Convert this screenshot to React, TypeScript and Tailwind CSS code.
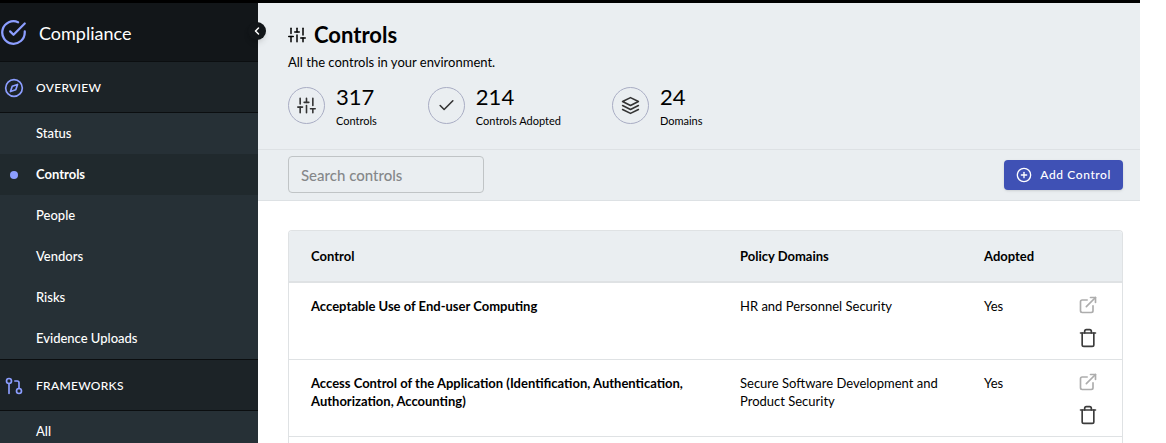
import type { ReactNode } from "react";
import {
  FiCheck,
  FiCheckCircle,
  FiChevronLeft,
  FiCompass,
  FiExternalLink,
  FiGitPullRequest,
  FiLayers,
  FiPlusCircle,
  FiSliders,
  FiTrash,
} from "react-icons/fi";

const overviewLinks = ["Status", "Controls", "People", "Vendors", "Risks", "Evidence Uploads"];

const controls = [
  {
    name: "Acceptable Use of End-user Computing",
    domain: "HR and Personnel Security",
    adopted: "Yes",
  },
  {
    name: "Access Control of the Application (Identification, Authentication, Authorization, Accounting)",
    domain: "Secure Software Development and Product Security",
    adopted: "Yes",
  },
];

function NavSection({ icon, title }: { icon: ReactNode; title: string }) {
  return (
    <h2 className="flex h-[51px] items-center gap-3 border-b border-[#0b0e10] bg-[#1c2327] pt-[2px] pl-1 text-xs font-medium tracking-wide text-white">
      <span className="text-[#8c9eff]">{icon}</span>
      {title}
    </h2>
  );
}

function NavLink({ label, active = false }: { label: string; active?: boolean }) {
  return (
    <li>
      <a
        href="#"
        aria-current={active ? "page" : undefined}
        className={
          active
            ? "flex h-[41px] items-center bg-[#20292d] pl-[10px] text-[13px] font-bold text-white"
            : "flex h-[41px] items-center pl-[10px] text-[13px] font-medium text-white"
        }
      >
        <span className={active ? "mr-[18px] size-2 rounded-full bg-[#8c9eff]" : "mr-[18px] size-2"} />
        {label}
      </a>
    </li>
  );
}

function Stat({ icon, value, label }: { icon: ReactNode; value: number; label: string }) {
  return (
    <div className="flex items-center gap-[11px]">
      <div className="flex size-[37px] items-center justify-center rounded-full border border-[#a9adc4] text-[#333]">
        {icon}
      </div>
      <div className="pt-[3px]">
        <div className="text-[22px] leading-7">{value}</div>
        <div className="text-[11px] leading-5">{label}</div>
      </div>
    </div>
  );
}

export default function App() {
  return (
    <div className="flex h-screen flex-col overflow-hidden bg-white pr-[26px] font-['Lato',sans-serif] text-black">
      <div className="h-[3px] shrink-0 bg-black" />
      <div className="flex min-h-0 flex-1">
        <aside className="relative w-[258px] shrink-0 bg-[#263036]">
          <div className="flex h-[59px] items-center gap-[12px] border-b border-[#0b0e10] bg-[#121619] text-lg text-white">
            <FiCheckCircle size={27} className="text-[#8c9eff]" />
            <span className="pt-[2px]">Compliance</span>
          </div>
          <button
            type="button"
            aria-label="Collapse sidebar"
            className="absolute top-[19px] -right-2 flex size-[18px] items-center justify-center rounded-full bg-[#121619] text-white shadow-md"
          >
            <FiChevronLeft size={12} strokeWidth={3} />
          </button>
          <nav>
            <NavSection icon={<FiCompass size={20} />} title="OVERVIEW" />
            <ul>
              {overviewLinks.map((label) => (
                <NavLink key={label} label={label} active={label === "Controls"} />
              ))}
            </ul>
            <div className="border-t border-[#0b0e10]">
              <NavSection icon={<FiGitPullRequest size={20} />} title="FRAMEWORKS" />
            </div>
            <ul>
              <NavLink label="All" />
            </ul>
          </nav>
        </aside>

        <main className="flex min-w-0 flex-1 flex-col">
          <header className="border-b border-[#dde1e4] bg-[#eaeef1] px-[30px] pt-[18px] pb-[18px]">
            <h1 className="flex items-center gap-2 text-[22px] leading-7 font-bold">
              <FiSliders size={18} />
              Controls
            </h1>
            <p className="mt-[3px] text-[13px] leading-5">All the controls in your environment.</p>
            <div className="mt-2 flex gap-[51px]">
              <Stat icon={<FiSliders size={19} strokeWidth={2} />} value={317} label="Controls" />
              <Stat icon={<FiCheck size={19} strokeWidth={2} />} value={214} label="Controls Adopted" />
              <Stat icon={<FiLayers size={19} strokeWidth={2} />} value={24} label="Domains" />
            </div>
          </header>

          <div className="flex items-center justify-between border-b border-[#dde1e4] bg-[#eaeef1] pt-[6px] pb-[7px] pr-[17px] pl-[30px]">
            <input
              type="search"
              aria-label="Search controls"
              placeholder="Search controls"
              className="h-[37px] w-[196px] rounded border border-[#c0c4c6] px-3 text-[15px] font-medium placeholder:text-[#858789]"
            />
            <button
              type="button"
              className="flex h-[30px] items-center gap-2 rounded bg-[#3f51b5] px-3 text-xs font-medium tracking-wider text-white shadow"
            >
              <FiPlusCircle size={16} />
              Add Control
            </button>
          </div>

          <section className="flex min-h-0 flex-1 pt-[29px] pr-[17px] pl-[30px]">
            <div className="flex-1 overflow-hidden rounded-t border border-b-0 border-[#dfe2e4]">
              <table className="w-full table-fixed border-collapse text-left text-[13px] leading-[18px]">
                <thead className="bg-[#eaeef1]">
                  <tr className="h-[51px] border-b-2 border-[#dfe2e4]">
                    <th className="px-[22px] font-bold">Control</th>
                    <th className="w-[244px] px-[22px] font-bold">Policy Domains</th>
                    <th className="w-[94px] pl-[22px] font-bold">Adopted</th>
                    <th className="w-[66px]" aria-label="Actions" />
                  </tr>
                </thead>
                <tbody>
                  {controls.map((control) => (
                    <tr key={control.name} className="h-[77px] border-b border-[#dfe2e4] align-top">
                      <td className="px-[22px] pt-[14px] font-bold">{control.name}</td>
                      <td className="px-[22px] pt-[14px]">{control.domain}</td>
                      <td className="pl-[22px] pt-[14px]">{control.adopted}</td>
                      <td className="pt-3 pr-[3px]">
                        <div className="flex flex-col items-center gap-[13px]">
                          <a href="#" aria-label={`Open ${control.name}`} className="text-[#adadad]">
                            <FiExternalLink size={20} strokeWidth={2} />
                          </a>
                          <button type="button" aria-label={`Delete ${control.name}`} className="text-[#3c3c3c]">
                            <FiTrash size={20} strokeWidth={2} />
                          </button>
                        </div>
                      </td>
                    </tr>
                  ))}
                </tbody>
              </table>
            </div>
          </section>
        </main>
      </div>
    </div>
  );
}
